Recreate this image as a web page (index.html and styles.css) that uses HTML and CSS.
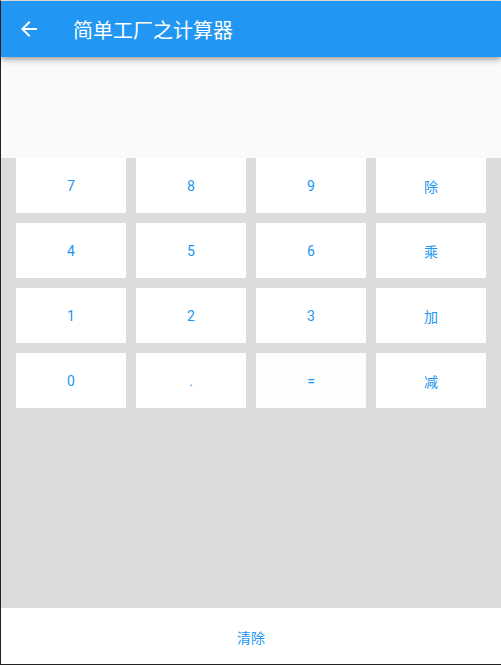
FILE: index.html
```html
<!DOCTYPE html>
<html lang="zh">
<head>
<meta charset="utf-8">
<link rel="stylesheet" href="styles.css">
</head>
<body>
<div class="app">
  <header class="appbar">
    <span class="back">
      <svg width="24" height="24" viewBox="0 0 24 24"><path d="M20 11H7.83l5.59-5.59L12 4l-8 8 8 8 1.41-1.41L7.83 13H20v-2z" fill="#fff"/></svg>
    </span>
    <h1 class="title">简单工厂之计算器</h1>
  </header>
  <div class="display"></div>
  <main class="keypad">
    <div class="grid">
      <button class="key">7</button>
      <button class="key">8</button>
      <button class="key">9</button>
      <button class="key">除</button>
      <button class="key">4</button>
      <button class="key">5</button>
      <button class="key">6</button>
      <button class="key">乘</button>
      <button class="key">1</button>
      <button class="key">2</button>
      <button class="key">3</button>
      <button class="key">加</button>
      <button class="key">0</button>
      <button class="key">.</button>
      <button class="key key-active">=</button>
      <button class="key">减</button>
    </div>
  </main>
  <footer class="clear">
    <button class="clear-btn">清除</button>
  </footer>
</div>
</body>
</html>
```
FILE: styles.css
```css
* { box-sizing: border-box; }
html, body { margin: 0; padding: 0; }
body {
  width: 501px;
  height: 665px;
  overflow: hidden;
  font-family: Roboto, "Noto Sans CJK SC", sans-serif;
  background: #fff;
}
.app {
  width: 501px;
  height: 665px;
  display: flex;
  flex-direction: column;
  border-left: 1px solid #222;
  border-bottom: 1px solid #222;
  border-top: 1px solid #e6e6e6;
}
.appbar {
  height: 56px;
  flex: none;
  background: #2196f3;
  display: flex;
  align-items: center;
  padding-left: 16px;
  box-shadow: 0 2px 4px -1px rgba(0,0,0,0.2), 0 4px 5px 0 rgba(0,0,0,0.14), 0 1px 10px 0 rgba(0,0,0,0.12);
  position: relative;
  z-index: 1;
}
.back { width: 24px; height: 24px; display: flex; }
.title {
  margin: 0 0 0 32px;
  color: #fff;
  font-size: 20px;
  font-weight: 400;
  font-family: Roboto, "Noto Sans CJK SC", sans-serif;
}
.display {
  height: 101px;
  flex: none;
  background: #fafafa;
}
.keypad {
  flex: 1;
  background: #dcdcdc;
  padding: 0 15px;
}
.grid {
  display: grid;
  grid-template-columns: repeat(4, 110px);
  grid-auto-rows: 55px;
  gap: 10px;
}
.key {
  border: none;
  background: #fff;
  color: #2196f3;
  font-family: Roboto, "Noto Sans CJK SC", sans-serif;
  font-size: 14px;
  padding: 0;
  margin: 0;
}
.key-active { background: #fbfdff; }
.clear {
  height: 56px;
  flex: none;
  background: #fff;
  display: flex;
}
.clear-btn {
  flex: 1;
  border: none;
  background: #fff;
  color: #2196f3;
  font-family: Roboto, "Noto Sans CJK SC", sans-serif;
  font-size: 14px;
  padding: 2px 0 0;
}
```
